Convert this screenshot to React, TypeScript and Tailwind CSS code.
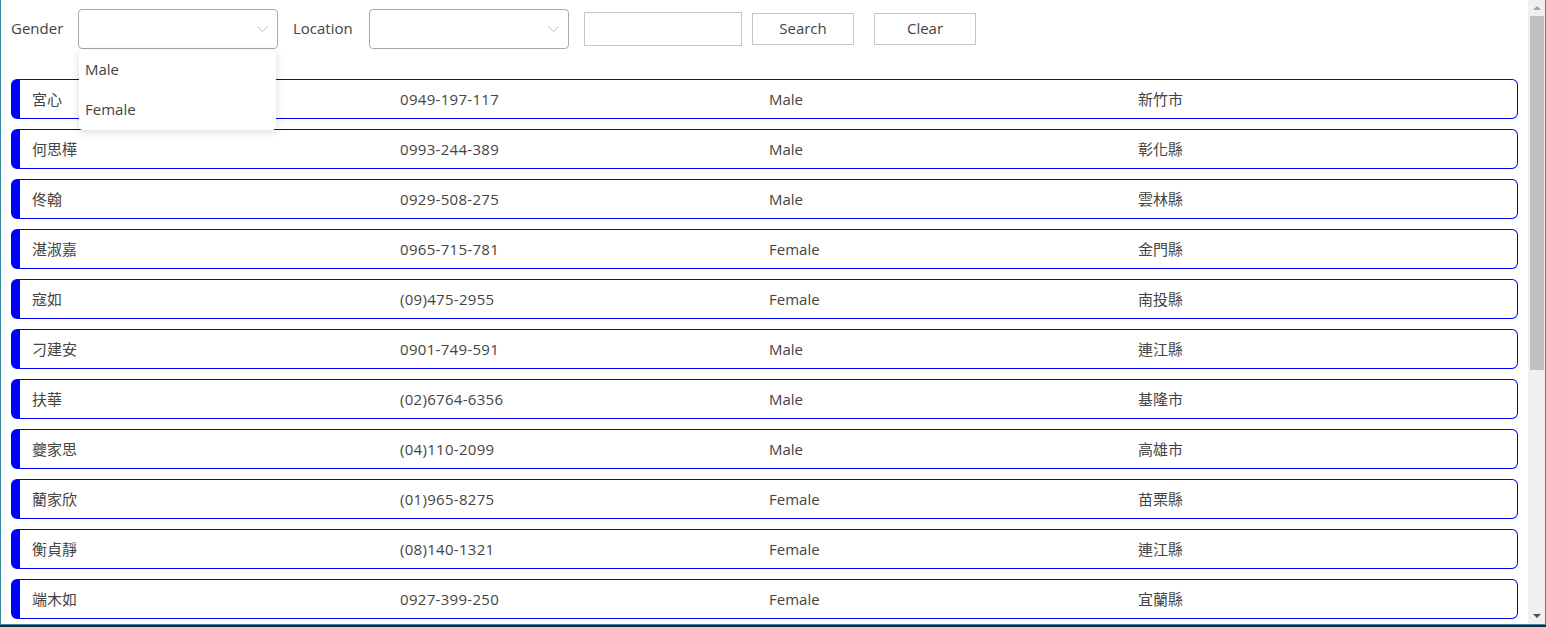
import React from "react";

type Person = {
  name: string;
  phone: string;
  gender: string;
  location: string;
};

const people: Person[] = [
  { name: "宮心", phone: "0949-197-117", gender: "Male", location: "新竹市" },
  { name: "何思樺", phone: "0993-244-389", gender: "Male", location: "彰化縣" },
  { name: "佟翰", phone: "0929-508-275", gender: "Male", location: "雲林縣" },
  { name: "湛淑嘉", phone: "0965-715-781", gender: "Female", location: "金門縣" },
  { name: "寇如", phone: "(09)475-2955", gender: "Female", location: "南投縣" },
  { name: "刁建安", phone: "0901-749-591", gender: "Male", location: "連江縣" },
  { name: "扶華", phone: "(02)6764-6356", gender: "Male", location: "基隆市" },
  { name: "夔家思", phone: "(04)110-2099", gender: "Male", location: "高雄市" },
  { name: "藺家欣", phone: "(01)965-8275", gender: "Female", location: "苗栗縣" },
  { name: "衡貞靜", phone: "(08)140-1321", gender: "Female", location: "連江縣" },
  { name: "端木如", phone: "0927-399-250", gender: "Female", location: "宜蘭縣" },
];

function Chevron() {
  return (
    <svg width="11" height="7" viewBox="0 0 11 7" className="shrink-0">
      <path d="M0.5 0.5 L5.5 5.5 L10.5 0.5" fill="none" stroke="#bdbdbd" strokeWidth="1" />
    </svg>
  );
}

function Select({ children }: { children?: React.ReactNode }) {
  return (
    <div className="relative">
      <div className="w-[200px] h-[40px] rounded-[4px] border border-[#a9a9a9] bg-white flex items-center justify-end pr-[9px]">
        <Chevron />
      </div>
      {children}
    </div>
  );
}

function Row({ p }: { p: Person }) {
  return (
    <div className="h-[40px] mb-[10px] flex rounded-[6px] border border-[#0000ff] border-l-[9px] bg-white">
      <div className="flex-1 grid grid-cols-[368px_369px_369px_1fr] items-center pl-[12px] text-[15px] text-[#444]">
        <span>{p.name}</span>
        <span className="tracking-[0.3px]">{p.phone}</span>
        <span>{p.gender}</span>
        <span>{p.location}</span>
      </div>
    </div>
  );
}

function Scrollbar() {
  return (
    <div className="w-[17px] bg-[#f0f0f0] flex flex-col items-center shrink-0">
      <div className="h-[16px] w-full flex items-center justify-center">
        <div className="w-0 h-0 border-l-[4px] border-r-[4px] border-b-[4px] border-l-transparent border-r-transparent border-b-[#a3a3a3]" />
      </div>
      <div className="w-[14px] h-[354px] bg-[#c1c1c1]" />
      <div className="flex-1" />
      <div className="h-[17px] w-full flex items-center justify-center">
        <div className="w-0 h-0 border-l-[4px] border-r-[4px] border-t-[4px] border-l-transparent border-r-transparent border-t-[#505050]" />
      </div>
    </div>
  );
}

export default function App() {
  return (
    <div
      className="w-[1546px] h-[627px] bg-[#1f2a30] flex flex-col overflow-hidden"
      style={{ fontFamily: '"Open Sans", "Noto Sans CJK TC", sans-serif' }}
    >
      <div className="flex-1 flex min-h-0 border-l border-r border-b border-[#3a8aa3] bg-white">
        <div className="flex-1 min-w-0 overflow-hidden px-[10px]">
          <div className="flex items-center h-[40px] mt-[9px] text-[15px] text-[#444]">
            <span className="w-[67px] -mt-[2px]">Gender</span>
            <Select>
              <div className="absolute left-[1px] top-[41px] w-[197px] rounded-[4px] bg-white shadow-[0_2px_8px_rgba(0,0,0,0.15)] z-10">
                <div className="h-[40px] flex items-center px-[6px] pb-[2px]">Male</div>
                <div className="h-[40px] flex items-center px-[6px] pb-[2px]">Female</div>
              </div>
            </Select>
            <span className="ml-[15px] w-[76px] -mt-[2px]">Location</span>
            <Select />
            <div className="ml-[15px] w-[158px] h-[34px] border border-[#c6c6c6] bg-white" />
            <button className="ml-[10px] w-[102px] h-[32px] pb-[2px] border border-[#c6c6c6] bg-white text-[15px] text-[#444]">
              Search
            </button>
            <button className="ml-[20px] w-[102px] h-[32px] pb-[2px] border border-[#c6c6c6] bg-white text-[15px] text-[#444]">
              Clear
            </button>
          </div>
          <div className="mt-[30px]">
            {people.map((p) => (
              <Row key={p.name} p={p} />
            ))}
          </div>
        </div>
        <Scrollbar />
      </div>
      <div className="h-[2px]" />
    </div>
  );
}
